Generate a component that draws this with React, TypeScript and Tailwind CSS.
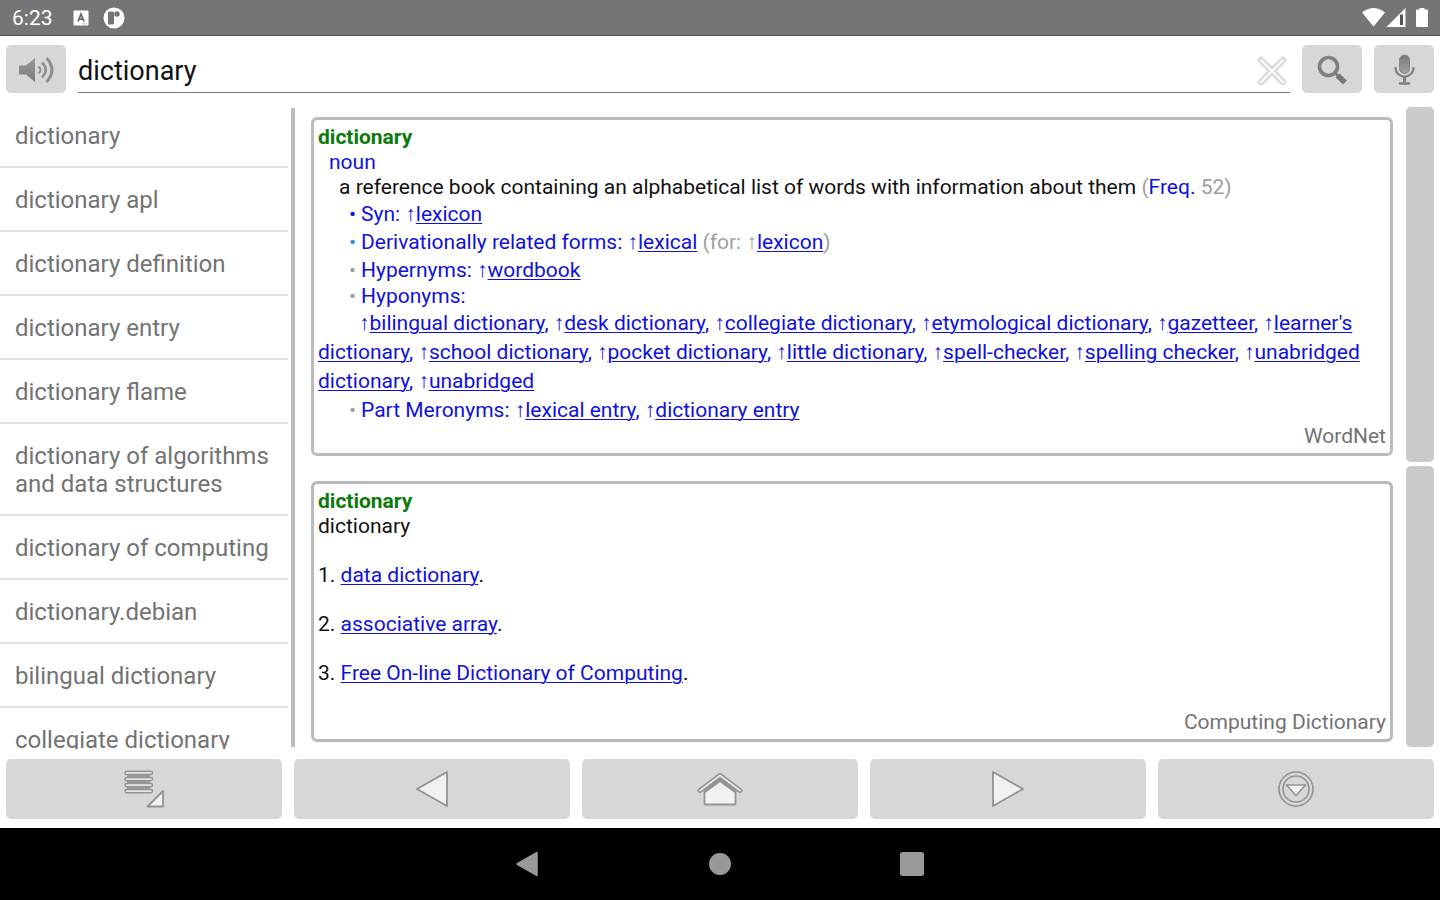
import { Fragment, useState } from "react";

const suggestions = [
  "dictionary",
  "dictionary apl",
  "dictionary definition",
  "dictionary entry",
  "dictionary flame",
  "dictionary of algorithms and data structures",
  "dictionary of computing",
  "dictionary.debian",
  "bilingual dictionary",
  "collegiate dictionary",
];

const hyponyms = [
  "bilingual dictionary",
  "desk dictionary",
  "collegiate dictionary",
  "etymological dictionary",
  "gazetteer",
  "learner's dictionary",
  "school dictionary",
  "pocket dictionary",
  "little dictionary",
  "spell-checker",
  "spelling checker",
  "unabridged dictionary",
  "unabridged",
];

const computing = ["data dictionary", "associative array", "Free On-line Dictionary of Computing"];

function WordLink({ word }: { word: string }) {
  return (
    <a href="#" className="text-[#1010dc] underline decoration-1 underline-offset-2">
      {word}
    </a>
  );
}

function Ref({ word }: { word: string }) {
  return (
    <>
      <span className="font-['Liberation_Sans'] leading-none">↑</span>
      <WordLink word={word} />
    </>
  );
}

function Bullet({ className }: { className: string }) {
  return <span className={`mr-1 inline-block w-2 ${className}`}>•</span>;
}

function SpeakerIcon() {
  return (
    <svg width="36" height="28" viewBox="0 0 36 28" aria-hidden="true">
      <defs>
        <linearGradient id="speaker" x1="0" y1="0" x2="0" y2="1">
          <stop offset="0" stopColor="#9a9a9a" />
          <stop offset="1" stopColor="#7b7b7b" />
        </linearGradient>
      </defs>
      <path d="M1 9.500h7l9-7.500v24l-9-7.500H1z" fill="url(#speaker)" />
      <g fill="none" stroke="#8f8f8f">
        <path d="M20.500 10.500q4 3.500 0 7" strokeWidth="2" />
        <path d="M24 6.500q7.500 7.500 0 15" strokeWidth="2.500" />
        <path d="M28.500 2q11 12 0 24" strokeWidth="3" />
      </g>
    </svg>
  );
}

function ClearIcon() {
  return (
    <svg width="32" height="32" viewBox="0 0 32 32" aria-hidden="true">
      <path d="M5 5l22 22M27 5L5 27" stroke="#e6e6e6" strokeWidth="8" strokeLinecap="round" opacity="0.600" />
      <path d="M5 5l22 22M27 5L5 27" stroke="#cccccc" strokeWidth="5" strokeLinecap="round" />
      <path d="M5 5l22 22M27 5L5 27" stroke="#ffffff" strokeWidth="2.600" strokeLinecap="round" />
    </svg>
  );
}

function SearchIcon() {
  return (
    <svg width="32" height="32" viewBox="0 0 32 32" aria-hidden="true">
      <circle cx="12.500" cy="12.500" r="9" fill="none" stroke="#808080" strokeWidth="3.600" />
      <path d="M18.500 18.500l4 4" stroke="#808080" strokeWidth="3" />
      <path d="M21.500 21.500l7.500 7" stroke="#767676" strokeWidth="5.500" />
    </svg>
  );
}

function MicIcon() {
  return (
    <svg width="22" height="32" viewBox="0 0 22 32" aria-hidden="true">
      <defs>
        <linearGradient id="mic" x1="0" y1="0" x2="0" y2="1">
          <stop offset="0" stopColor="#787878" />
          <stop offset="1" stopColor="#a2a2a2" />
        </linearGradient>
      </defs>
      <rect x="6.500" y="1" width="10" height="18.500" rx="5" fill="url(#mic)" stroke="#858585" />
      <path d="M2.500 13v1a9 8.500 0 0 0 18 0v-1" fill="none" stroke="#808080" strokeWidth="2.200" />
      <path d="M11.500 22.500v6" stroke="#808080" strokeWidth="3" />
      <path d="M7 29.500h9" stroke="#808080" strokeWidth="2.400" strokeLinecap="round" />
    </svg>
  );
}

function MenuIcon() {
  return (
    <svg width="42" height="38" viewBox="0 0 42 38" aria-hidden="true">
      <path d="M4 6h23M4 12h23M4 18h23" stroke="#9c9d9c" strokeWidth="2.500" />
      <g fill="#e4e5e4" stroke="#929392" strokeWidth="1.500">
        {[1.2, 7.4, 13.4, 19.4].map((y) => (
          <rect key={y} x="2" y={y} width="27.500" height="3.400" rx="1.700" />
        ))}
        <path d="M24.500 36.500L40 21V36.500z" fill="#f0f1f0" strokeWidth="1.800" strokeLinejoin="round" />
      </g>
    </svg>
  );
}

function TriangleIcon({ flip = false }: { flip?: boolean }) {
  return (
    <svg width="34" height="38" viewBox="0 0 34 38" aria-hidden="true">
      <path
        d={flip ? "M2 2L32 19L2 36z" : "M32 2L2 19L32 36z"}
        fill="#f0f1f0"
        stroke="#929392"
        strokeWidth="1.800"
        strokeLinejoin="round"
      />
    </svg>
  );
}

function HomeIcon() {
  return (
    <svg width="46" height="34" viewBox="0 0 46 34" aria-hidden="true">
      <path d="M7.500 18L23 7l15.500 11v13.500q0 1-1 1h-29q-1 0-1-1z" fill="#f0f1f0" stroke="#929392" strokeWidth="1.800" />
      <path d="M7 19.500L23 8L39 19.500" fill="none" stroke="#929392" strokeWidth="3.500" />
      <path d="M3 18.500L23 3.500L43 18.500" fill="none" stroke="#929392" strokeWidth="5" strokeLinecap="round" strokeLinejoin="round" />
      <path d="M3 18.500L23 3.500L43 18.500" fill="none" stroke="#e2e3e2" strokeWidth="2" strokeLinecap="round" strokeLinejoin="round" />
    </svg>
  );
}

function MoreIcon() {
  return (
    <svg width="38" height="38" viewBox="0 0 38 38" aria-hidden="true">
      <g fill="none" stroke="#929392" strokeWidth="1.600">
        <circle cx="19" cy="19" r="17" />
        <circle cx="19" cy="19" r="13" />
        <path d="M9.500 15h19L19 25.500z" fill="#f0f1f0" strokeLinejoin="round" />
      </g>
    </svg>
  );
}

function StatusBar() {
  return (
    <div className="flex h-9 shrink-0 items-center border-b border-[#4f4f4f] bg-[#757575] px-3 pt-px text-white">
      <span className="text-[21px] leading-6">6:23</span>
      <svg className="ml-5" width="16" height="16" viewBox="0 0 16 16" aria-hidden="true">
        <rect x="0.500" y="0.500" width="15" height="15" rx="1" fill="#fff" />
        <path d="M5 11.500L8 4l3 7.500M6 9.200h4" fill="none" stroke="#666" strokeWidth="1.700" />
        <path d="M9 13.800h5" stroke="#999" strokeDasharray="1 1" />
      </svg>
      <svg className="ml-3.5" width="22" height="22" viewBox="0 0 22 22" aria-hidden="true">
        <circle cx="11" cy="11" r="10.500" fill="#fff" />
        <rect x="5" y="4.500" width="6" height="13" rx="1.500" fill="#757575" />
        <circle cx="14" cy="7" r="2.700" fill="#757575" />
      </svg>
      <div className="ml-auto flex items-center">
        <svg width="66" height="20" viewBox="0 0 66 20" aria-hidden="true">
          <path d="M0 4.500Q11.500-4.500 23 4.500L11.500 18.500z" fill="#fff" />
          <path d="M24.500 19L43.500 0v19z" fill="#fff" />
          <path d="M39.500 6.500v10.500" stroke="#555" strokeWidth="3" />
          <path d="M55 1.500h2.500V0h5v1.500H65q1 0 1 1V18q0 1-1 1H55q-1 0-1-1V2.500q0-1 1-1z" fill="#fff" />
        </svg>
      </div>
    </div>
  );
}

export default function App() {
  const [query, setQuery] = useState("dictionary");
  const tools = [
    { label: "Menu", icon: <MenuIcon /> },
    { label: "Back", icon: <TriangleIcon /> },
    { label: "Home", icon: <HomeIcon /> },
    { label: "Forward", icon: <TriangleIcon flip /> },
    { label: "More", icon: <MoreIcon /> },
  ];
  const squareButton =
    "flex h-12 w-[60px] shrink-0 items-center justify-center rounded-[5px] bg-[#d6d8d6] pt-px";

  return (
    <div className="flex h-screen flex-col bg-white font-['Roboto','Noto_Sans_CJK_JP',sans-serif]">
      <StatusBar />

      <header className="flex shrink-0 items-center gap-3 px-1.5 pt-[9px] pb-2.5">
        <button type="button" aria-label="Speak" className={squareButton}>
          <SpeakerIcon />
        </button>
        <div className="flex h-12 flex-1 items-center border-b border-[#757575]">
          <input
            type="text"
            aria-label="Search word"
            value={query}
            onChange={(e) => setQuery(e.target.value)}
            className="h-full min-w-0 flex-1 bg-transparent pt-1 text-[27px] text-[#111] outline-none"
          />
          <button type="button" aria-label="Clear" onClick={() => setQuery("")} className="mr-0.5 pt-1">
            <ClearIcon />
          </button>
        </div>
        <button type="button" aria-label="Search" className={squareButton}>
          <SearchIcon />
        </button>
        <button type="button" aria-label="Voice search" className={squareButton}>
          <MicIcon />
        </button>
      </header>

      <div className="flex min-h-0 flex-1">
        <nav aria-label="Suggestions" className="-mb-0.5 w-1/5 shrink-0 overflow-hidden pt-px">
          <ul>
            {suggestions.map((word) => (
              <li key={word} className="border-b-2 border-[#e3e3e3]">
                <a href="#" className="block pt-[18px] pb-4 pl-[15px] text-2xl leading-7 text-[#737373]">
                  {word}
                </a>
              </li>
            ))}
          </ul>
        </nav>
        <div className="mt-[5px] ml-[3px] w-1 shrink-0 bg-[#bdbdbd]" />

        <main className="mt-3.5 ml-4 min-w-0 flex-1 overflow-hidden text-[21px] leading-[25px] text-[#111]">
          <article className="rounded-md border-3 border-[#bababa] px-1 pt-[5px] pb-1">
            <h2 className="font-bold text-[#0b7a0b]">dictionary</h2>
            <p className="pl-[11px] text-[#1010dc]">noun</p>
            <p className="pl-[21px]">
              a reference book containing an alphabetical list of words with information about them{" "}
              <span className="text-[#9e9e9e]">
                (<span className="text-[#1010dc]">Freq.</span> 52)
              </span>
            </p>
            <div className="text-[#1010dc]">
              <p className="pl-[31px] leading-7">
                <Bullet className="text-[#1010dc]" />
                Syn: <Ref word="lexicon" />
              </p>
              <p className="pl-[31px] leading-7">
                <Bullet className="text-[#2a8fe0]" />
                Derivationally related forms: <Ref word="lexical" />{" "}
                <span className="text-[#9e9e9e]">
                  (for: <Ref word="lexicon" />)
                </span>
              </p>
              <p className="pl-[31px] leading-7">
                <Bullet className="text-[#9e9e9e]" />
                Hypernyms: <Ref word="wordbook" />
              </p>
              <p className="pl-[31px]">
                <Bullet className="text-[#9e9e9e]" />
                Hyponyms:
              </p>
              <p className="indent-[41px] leading-[29px]">
                {hyponyms.map((word, i) => (
                  <Fragment key={word}>
                    {i > 0 && ", "}
                    <Ref word={word} />
                  </Fragment>
                ))}
              </p>
              <p className="pl-[31px] leading-7">
                <Bullet className="text-[#9e9e9e]" />
                Part Meronyms: <Ref word="lexical entry" />, <Ref word="dictionary entry" />
              </p>
            </div>
            <p className="text-right text-[#737373]">WordNet</p>
          </article>

          <article className="mt-[25px] rounded-md border-3 border-[#bababa] px-1 pt-[5px] pb-1">
            <h2 className="font-bold text-[#0b7a0b]">dictionary</h2>
            <p>dictionary</p>
            {computing.map((word, i) => (
              <p key={word} className="mt-6">
                {i + 1}. <WordLink word={word} />.
              </p>
            ))}
            <p className="mt-6 text-right text-[#737373]">Computing Dictionary</p>
          </article>
        </main>

        <div className="mt-1 mr-1.5 ml-[13px] flex w-7 shrink-0 flex-col gap-1">
          <div className="flex-[355] rounded-[5px] bg-[#cacaca]" />
          <div className="flex-[281] rounded-[5px] bg-[#cacaca]" />
        </div>
      </div>

      <div className="flex shrink-0 gap-3 px-1.5 pt-3 pb-[9px]">
        {tools.map(({ label, icon }) => (
          <button
            key={label}
            type="button"
            aria-label={label}
            className="flex h-[60px] flex-1 items-center justify-center rounded-[5px] bg-[#d6d8d6]"
          >
            {icon}
          </button>
        ))}
      </div>

      <div className="flex h-[72px] shrink-0 items-center justify-center bg-black">
        <button type="button" aria-label="System back" className="flex h-full w-48 items-center justify-center">
          <svg width="24" height="26" viewBox="0 0 24 26" aria-hidden="true">
            <path d="M21 1.500L1 13l20 11.500z" fill="#999" stroke="#999" strokeWidth="1.500" strokeLinejoin="round" />
          </svg>
        </button>
        <button type="button" aria-label="System home" className="flex h-full w-48 items-center justify-center">
          <span className="size-[22px] rounded-full bg-[#999]" />
        </button>
        <button type="button" aria-label="Recent apps" className="flex h-full w-48 items-center justify-center">
          <span className="size-6 rounded-[3px] bg-[#999]" />
        </button>
      </div>
    </div>
  );
}
